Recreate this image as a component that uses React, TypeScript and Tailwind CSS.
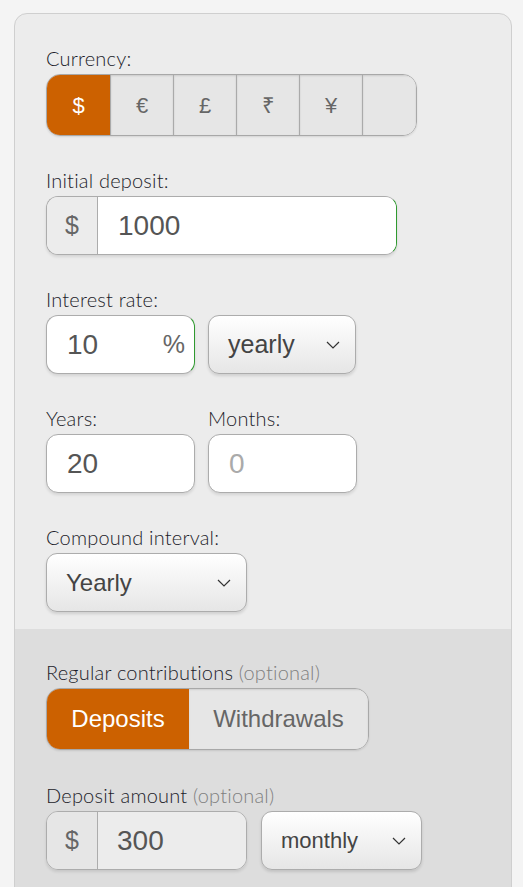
import React from "react";

const labelFont = { fontFamily: "Lato, 'Noto Sans', sans-serif" };
const inputFont = { fontFamily: "'Liberation Sans', Arial, sans-serif" };

function Label({ text, optional }: { text: string; optional?: boolean }) {
  return (
    <div className="mb-[5px] text-[20px] font-light leading-[21px] tracking-[0.2px] text-[#1c1c2a]" style={labelFont}>
      {text}
      {optional && <span className="text-[#808080]"> (optional)</span>}
    </div>
  );
}

function Chevron() {
  return (
    <svg width="14" height="8" viewBox="0 0 14 8" className="shrink-0">
      <polyline points="1,1 7,7 13,1" fill="none" stroke="#333" strokeWidth="1.2" />
    </svg>
  );
}

function Select({ value, width, size }: { value: string; width: string; size: string }) {
  return (
    <div
      className={`flex h-[59px] ${width} items-center justify-between rounded-[11px] border border-[#acacac] bg-gradient-to-b from-white to-[#e6e6e6] pl-[19px] pr-[15px] text-[#444] shadow-[0_2px_3px_rgba(0,0,0,0.12)] ${size}`}
      style={inputFont}
    >
      <span>{value}</span>
      <Chevron />
    </div>
  );
}

export default function App() {
  const currencies = ["$", "€", "£", "₹", "¥", ""];
  return (
    <div className="min-h-screen bg-[#f4f4f4] pl-[14px] pt-[13px]">
      <div className="w-[498px] overflow-hidden rounded-t-[13px] border border-[#cfcfcf] bg-[#ececec]">
        <div className="flex flex-col gap-[34px] pb-[17px] pl-[31px] pt-[34px]">
          <div>
            <Label text="Currency:" />
            <div className="flex h-[62px] w-[371px] overflow-hidden rounded-[14px] border border-[#a8a8a8] shadow-[0_1px_2px_rgba(0,0,0,0.1)]" style={inputFont}>
              {currencies.map((c, i) => (
                <div
                  key={i}
                  className={
                    i === 0
                      ? "flex w-[63px] items-center justify-center bg-[#cc6100] text-[22px] text-white"
                      : i === 5
                      ? "flex flex-1 items-center justify-center border-l border-[#aaaaaa] bg-[#e6e6e6] shadow-[inset_0_1px_2px_rgba(0,0,0,0.12)]"
                      : "flex w-[63px] items-center justify-center border-l border-[#aaaaaa] bg-[#e6e6e6] text-[22px] text-[#666] shadow-[inset_0_1px_2px_rgba(0,0,0,0.12)]"
                  }
                >
                  {c}
                </div>
              ))}
            </div>
          </div>

          <div>
            <Label text="Initial deposit:" />
            <div className="flex h-[59px] w-[351px] overflow-hidden rounded-[12px] border border-[#acacac] border-r-[#2f9a2f] shadow-[0_2px_3px_rgba(0,0,0,0.1)]" style={inputFont}>
              <div className="flex w-[51px] items-center justify-center border-r border-[#acacac] bg-[#ececec] text-[25px] text-[#666]">$</div>
              <div className="flex flex-1 items-center bg-white pl-[20px] text-[28px] text-[#555]">1000</div>
            </div>
          </div>

          <div>
            <Label text="Interest rate:" />
            <div className="flex gap-[13px]">
              <div className="flex h-[59px] w-[149px] items-center justify-between rounded-[12px] border border-[#acacac] border-r-[#2f9a2f] bg-white pl-[20px] pr-[9px] text-[#555] shadow-[0_2px_3px_rgba(0,0,0,0.1)]" style={inputFont}>
                <span className="text-[28px]">10</span>
                <span className="text-[25px] text-[#666]">%</span>
              </div>
              <Select value="yearly" width="w-[148px]" size="text-[25px]" />
            </div>
          </div>

          <div className="flex gap-[13px]">
            <div>
              <Label text="Years:" />
              <div className="flex h-[59px] w-[149px] items-center rounded-[12px] border border-[#acacac] bg-white pl-[20px] text-[28px] text-[#555] shadow-[0_2px_3px_rgba(0,0,0,0.1)]" style={inputFont}>20</div>
            </div>
            <div>
              <Label text="Months:" />
              <div className="flex h-[59px] w-[149px] items-center rounded-[12px] border border-[#acacac] bg-white pl-[20px] text-[28px] text-[#aaa] shadow-[0_2px_3px_rgba(0,0,0,0.1)]" style={inputFont}>0</div>
            </div>
          </div>

          <div>
            <Label text="Compound interval:" />
            <Select value="Yearly" width="w-[201px]" size="text-[24px]" />
          </div>
        </div>

        <div className="flex flex-col gap-[35px] bg-[#dddddd] pb-[40px] pl-[31px] pt-[33px]">
          <div>
            <Label text="Regular contributions" optional />
            <div className="flex h-[62px] w-[323px] overflow-hidden rounded-[14px] border border-[#a8a8a8] text-[24px] shadow-[0_1px_2px_rgba(0,0,0,0.1)]" style={inputFont}>
              <div className="flex w-[142px] items-center justify-center bg-[#cc6100] text-white">Deposits</div>
              <div className="flex flex-1 items-center justify-center bg-[#e6e6e6] text-[#666] shadow-[inset_0_1px_2px_rgba(0,0,0,0.1)]">Withdrawals</div>
            </div>
          </div>

          <div>
            <Label text="Deposit amount" optional />
            <div className="flex gap-[14px]">
              <div className="flex h-[59px] w-[201px] overflow-hidden rounded-[12px] border border-[#acacac] shadow-[0_2px_3px_rgba(0,0,0,0.1)]" style={inputFont}>
                <div className="flex w-[51px] items-center justify-center border-r border-[#acacac] bg-[#e6e6e6] text-[25px] text-[#666]">$</div>
                <div className="flex flex-1 items-center bg-[#ececec] pl-[19px] text-[28px] text-[#555]">300</div>
              </div>
              <Select value="monthly" width="w-[161px]" size="text-[22px]" />
            </div>
          </div>
        </div>
      </div>
    </div>
  );
}
